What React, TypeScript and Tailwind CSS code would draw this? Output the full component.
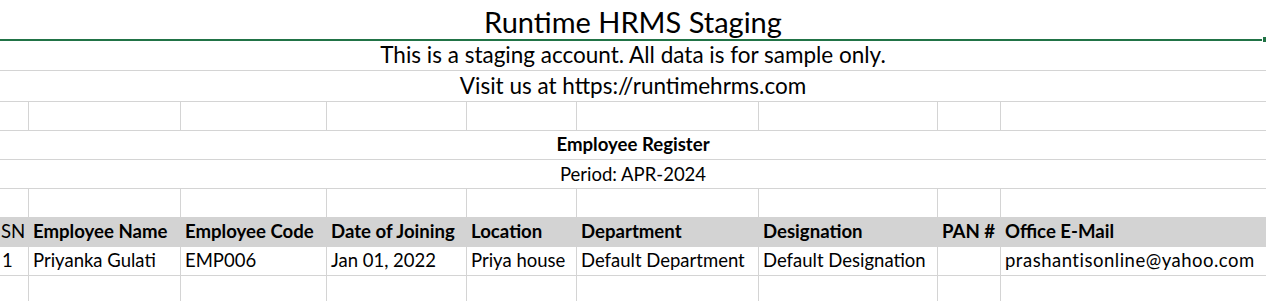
import React from "react";

const COLS = "grid grid-cols-[29px_152px_146px_140px_110px_182px_179px_63px_265px]";

const HEADERS = [
  "SN",
  "Employee Name",
  "Employee Code",
  "Date of Joining",
  "Location",
  "Department",
  "Designation",
  "PAN #",
  "Office E-Mail",
];

const ROW = [
  "1",
  "Priyanka Gulati",
  "EMP006",
  "Jan 01, 2022",
  "Priya house",
  "Default Department",
  "Default Designation",
  "",
  "prashantisonline@yahoo.com",
];

// empty grid row with vertical cell lines
const EmptyRow = ({ h }: { h: string }) => (
  <div className={`${COLS} ${h}`}>
    {HEADERS.map((_, i) => (
      <div key={i} className={i < HEADERS.length - 1 ? "border-r border-[#d4d4d4]" : ""} />
    ))}
  </div>
);

export default function App() {
  return (
    <div
      className="relative w-[1266px] h-[301px] overflow-hidden bg-white text-black"
      style={{ fontFamily: "Lato, 'Noto Sans', sans-serif" }}
    >
      {/* Title (selected merged cell) */}
      <div className="h-[41px] border-b-2 border-[#217346] flex items-end justify-center pb-[3px]">
        <span className="text-[29px] leading-none">Runtime HRMS Staging</span>
      </div>
      <div className="absolute left-[1262px] top-[36px] w-[5px] h-[7px] bg-[#217346] border border-white" />

      <div className="h-[30px] border-b border-[#d4d4d4] flex items-end justify-center pb-[4px]">
        <span className="text-[22.5px] leading-none">This is a staging account. All data is for sample only.</span>
      </div>
      <div className="h-[31px] border-b border-[#d4d4d4] flex items-end justify-center pb-[4px]">
        <span className="text-[22.5px] leading-none">Visit us at https://runtimehrms.com</span>
      </div>

      <div className="border-b border-[#d4d4d4]">
        <EmptyRow h="h-[28px]" />
      </div>

      {/* Report heading */}
      <div className="h-[29px] border-b border-[#d4d4d4] flex items-end justify-center pb-[5px]">
        <span className="text-[18.6px] font-bold leading-none">Employee Register</span>
      </div>
      <div className="h-[29px] border-b border-[#d4d4d4] flex items-end justify-center pb-[5px]">
        <span className="text-[18.5px] leading-none">Period: APR-2024</span>
      </div>

      <EmptyRow h="h-[28px]" />

      {/* Column header */}
      <div className={`${COLS} h-[30px] bg-[#d3d3d3] text-[18.6px] font-bold`}>
        {HEADERS.map((t, i) => (
          <div
            key={t}
            className={`flex items-end pb-[6px] whitespace-nowrap leading-none ${i === 0 ? "pl-px font-normal" : "pl-[4px]"}`}
          >
            {t}
          </div>
        ))}
      </div>

      {/* Data row */}
      <div className={`${COLS} h-[29px] border-b border-[#d4d4d4] text-[18.5px]`}>
        {ROW.map((t, i) => (
          <div
            key={i}
            className={`flex items-end pb-[6px] whitespace-nowrap leading-none ${i === 0 ? "pl-[2px]" : "pl-[4px]"} ${
              i < ROW.length - 1 ? "border-r border-[#d4d4d4]" : "tracking-[0.5px]"
            }`}
          >
            {t}
          </div>
        ))}
      </div>

      <EmptyRow h="h-[30px]" />
    </div>
  );
}
